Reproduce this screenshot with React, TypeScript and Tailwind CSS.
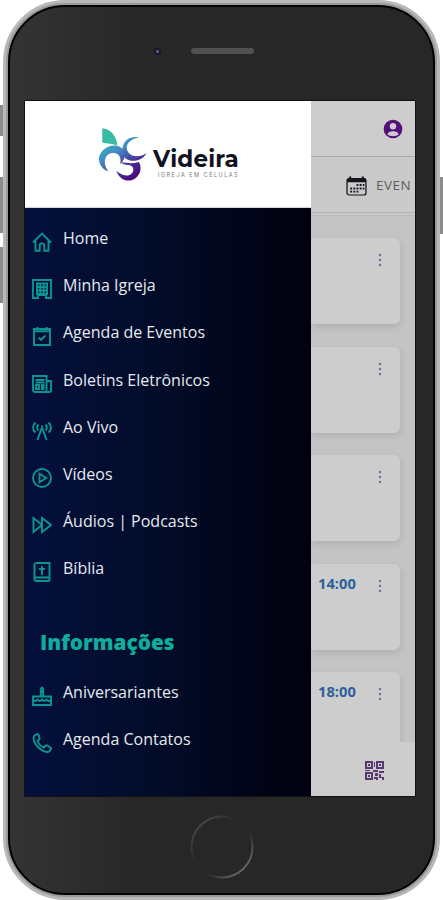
import type { ReactNode } from "react";

interface MenuItem {
  label: string;
  icon: ReactNode;
}

const MAIN_ITEMS: MenuItem[] = [
  {
    label: "Home",
    icon: <path d="M1 10.5 10 1.5l9 9M3.5 8.5v10.2h4.2v-5a2.3 2.3 0 0 1 4.6 0v5h4.2V8.5" />,
  },
  {
    label: "Minha Igreja",
    icon: (
      <path d="M1 1h18v18h-5v-3H6v3H1zM5 4v11M8.3 4v12M11.7 4v12M15 4v11M4 4.5h12M4 8h12M4 11.5h12M4 15h12" />
    ),
  },
  {
    label: "Agenda de Eventos",
    icon: <path d="M2 3h16v16H2zM2 5.2h16M5.5 1v3M14.5 1v3M6.8 11.5l2.3 2.3 4.3-4.3" />,
  },
  {
    label: "Boletins Eletrônicos",
    icon: (
      <path d="M1 2h13.5v16H3a2 2 0 0 1-2-2zM14.5 7H19v9a2 2 0 0 1-2 2h-3M3.5 6h9M3.5 8.5h9M4 11h3v4H4zM9 11h3.5M9 13h3.5M9 15h3.5" />
    ),
  },
  {
    label: "Ao Vivo",
    icon: (
      <path d="M9.5 7.5 5.5 19M10.5 7.5 14.5 19M10 4.5v4M6.5 3.5a4.5 4.5 0 0 0 0 6M13.5 3.5a4.5 4.5 0 0 1 0 6M3.5 1.5C.2 4.5.2 8.5 3.5 11.5M16.5 1.5c3.3 3 3.3 7 0 10" />
    ),
  },
  {
    label: "Vídeos",
    icon: (
      <>
        <circle cx="10" cy="10" r="9" />
        <path d="M7.5 5.8v8.4l6.7-4.2z" />
      </>
    ),
  },
  {
    label: "Áudios | Podcasts",
    icon: <path d="M1.5 3v14L10 10zM10 3v14l9-7z" />,
  },
  {
    label: "Bíblia",
    icon: <path d="M17.5 15.5V1H4.5a2 2 0 0 0-2 2v14a2 2 0 0 0 2 2h13M2.8 15.5h14.7v3.5M10 4v9M7 7h6" />,
  },
];

const INFO_ITEMS: MenuItem[] = [
  {
    label: "Aniversariantes",
    icon: (
      <path d="M1 10.5h18V19H1zM1 13.5c1.5 2 3 2 4.5 0 1.5 2 3 2 4.5 0 1.5 2 3 2 4.5 0 1.5 2 3 2 4.5 0M8.8 10V6h2.4v4M10 1C8 3.7 8.5 5 10 5s2-1.3 0-4" />
    ),
  },
  {
    label: "Agenda Contatos",
    icon: (
      <path d="M5.3 1.2 2.7 2.4C-.2 5 3 11 6 14s8.5 6.5 11.5 4.3l1.4-2.2c.3-.7 0-1.2-.5-1.6l-3.2-2c-.7-.4-1.3-.2-1.8.4L12 14.5C9.5 13.5 6.5 10.5 5.5 8L7.2 6.6c.5-.5.6-1 .3-1.7L6.6 2c-.2-.6-.7-1-1.3-.8z" />
    ),
  },
];

const EVENT_TIMES = ["", "", "", "14:00", "18:00"];

const MenuRow = ({ item }: { item: MenuItem }) => (
  <li className="flex h-[47.2px] items-start">
    <svg
      viewBox="0 0 20 20"
      className="mt-[5px] ml-[7px] h-5 w-5 shrink-0 fill-none stroke-[#0b9590] stroke-[1.9]"
    >
      {item.icon}
    </svg>
    <span className="ml-[11px] text-[16px] leading-[22px] whitespace-nowrap text-[#e6e9ee]">
      {item.label}
    </span>
  </li>
);

const Logo = () => (
  <div className="flex h-[107px] items-start border-b border-gray-300 bg-white">
    <svg viewBox="0 0 50 58" className="mt-6 ml-[72px] h-[58px] w-[50px] shrink-0">
      <defs>
        <linearGradient id="grape" gradientUnits="userSpaceOnUse" x1="6" y1="12" x2="34" y2="54">
          <stop offset="0" stopColor="#2fc4ae" />
          <stop offset="0.4" stopColor="#4389c5" />
          <stop offset="0.65" stopColor="#45459e" />
          <stop offset="1" stopColor="#4b087b" />
        </linearGradient>
      </defs>
      <path d="M5.3 3.3C13 4 19.5 10 20.5 21 16 18 10 19 5.3 17.5z" fill="#39baa4" />
      <g fill="url(#grape)">
        <path d="M41.5 12.5C30 10 23 20 26 30c3 8 19 8 23.5-2C43 33 34 32 31 27c-4-7 2-13 10.500-14.5z" />
        <path d="M26 24C16 15 1 25 2 35c1 7 5 10 9.5 11.5C5 38 8 29 15 28c7-1 10 5 8 11 5-4 6-9 3-15z" />
        <path d="M24 37c2 3 5 3 8 3 6 1 6 9-1 10.5-4 .5-8-1.5-11.5-4.5 2.5 8 9.5 11 15.5 9 7-2 11-11 7-18-7 2-12 1-18 0z" />
      </g>
    </svg>
    <div className="mt-[46px] ml-1.5">
      <p className="font-[Montserrat,Inter,sans-serif] text-[23px] leading-6 font-bold tracking-[0.2px] text-[#10121d]">
        Videira
      </p>
      <p className="mt-0.5 ml-[5px] font-[Inter,sans-serif] text-[5.5px] leading-[5px] tracking-[1.5px] whitespace-nowrap text-[#777785]">
        IGREJA EM CÉLULAS
      </p>
    </div>
  </div>
);

const Drawer = () => (
  <aside className="flex w-[286px] shrink-0 flex-col bg-linear-to-r from-[#04103d] via-[#020b27] to-[#01020f]">
    <Logo />
    <ul className="mt-[19px] h-[379px]">
      {MAIN_ITEMS.map((item) => (
        <MenuRow key={item.label} item={item} />
      ))}
    </ul>
    <h2 className="mt-[22px] ml-[15px] text-[20.8px] leading-[28px] font-extrabold text-[#0ead9d]">
      Informações
    </h2>
    <ul className="mt-[25px]">
      {INFO_ITEMS.map((item) => (
        <MenuRow key={item.label} item={item} />
      ))}
    </ul>
  </aside>
);

const EventCard = ({ time }: { time: string }) => (
  <div className="flex h-[86px] w-[89px] shrink-0 items-start rounded-r-md bg-[#cdcdcd] pt-[9px] shadow-[1px_3px_7px_rgba(0,0,0,0.1)]">
    <span className="ml-[7px] w-[48px] text-[14.7px] leading-5 font-bold text-[#2e5f9c]">{time}</span>
    <svg viewBox="0 0 4 14" className="mt-[6px] ml-[12px] h-3.5 w-1 fill-[#6173a0]">
      <circle cx="2" cy="2" r="1.2" />
      <circle cx="2" cy="7" r="1.2" />
      <circle cx="2" cy="12" r="1.2" />
    </svg>
  </div>
);

const EventsPanel = () => (
  <main className="flex min-w-0 flex-1 flex-col overflow-hidden bg-[#cdcdcd]">
    <header className="flex h-14 shrink-0 items-start justify-end border-b border-[#aaa] pt-[18px] pr-[12px]">
      <svg viewBox="0 0 20 20" className="h-5 w-5">
        <circle cx="10" cy="10" r="9.3" fill="#511077" />
        <circle cx="10" cy="7.2" r="3.2" fill="#d0c8d5" />
        <path d="M4.5 15.5c0-4.5 11-4.5 11 0-2.5 2.3-8.5 2.3-11 0z" fill="#d0c8d5" />
      </svg>
    </header>
    <div className="flex h-[56px] shrink-0 items-center overflow-hidden border-b border-[#b4b4b4] bg-[#cacaca] pl-[35px]">
      <svg viewBox="0 0 20 20" className="mt-0.5 h-5 w-[21px] shrink-0" preserveAspectRatio="none">
        <rect x="1" y="2.5" width="18" height="16.5" rx="2" fill="none" stroke="#15151d" strokeWidth="1.2" />
        <path d="M1 6.200V3l2-1V.5h2V2h10V.5h2V2l2 1v3.200z" fill="#15151d" />
        <path
          d="M10 9h1.8M13 9h1.8M16 9h1.5M4 12.5h1.8M7 12.5h1.8M10 12.5h1.8M13 12.5h1.8M16 12.5h1.5M4 15.7h1.8M7 15.7h1.8M10 15.7h1.8"
          stroke="#15151d"
          strokeWidth="1.8"
        />
      </svg>
      <span className="ml-[9px] text-[13.5px] leading-5 tracking-[0.5px] text-[#5e5e5e]">EVEN</span>
    </div>
    <div className="h-[3px] shrink-0 border-b border-[#bababa] bg-[#c8c8c8]" />
    <div className="flex h-[526px] w-full shrink-0 flex-col gap-[22.5px] overflow-hidden bg-[#c4c4c4] pt-[22px]">
      {EVENT_TIMES.map((time, index) => (
        <EventCard key={index} time={time} />
      ))}
    </div>
    <footer className="flex flex-1 justify-end bg-[#cdcdcd] pt-[19px] pr-[31px]">
      <svg viewBox="0 0 19 19" className="h-[19px] w-[19px]" fill="#583970">
        <path d="M0 0h8v8H0zm2 2v4h4V2zM11 0h8v8h-8zm2 2v4h4V2zM0 11h8v8H0zm2 2v4h4v-4z" fillRule="evenodd" />
        <path d="M3 3h2v2H3zM14 3h2v2h-2zM3 14h2v2H3zM9 1h1v5H9zM8 9h5v2H8zM10 12h3v3h-3zM14 10h5v2h-5zM14 13h2v3h3v3h-2v-2h-3zM9 16h4v3h-2v-1H9zM0 9h5v1H0z" />
      </svg>
    </footer>
  </main>
);

const App: React.FC = () => {
  return (
    <div className="relative h-[900px] w-[443px] overflow-hidden bg-white font-['Open_Sans',sans-serif]">
      <div className="absolute top-[105px] left-0 h-[31px] w-2 bg-[#8c8c8c]" />
      <div className="absolute top-[177px] left-0 h-[56px] w-2 bg-[#8c8c8c]" />
      <div className="absolute top-[247px] left-0 h-[56px] w-2 bg-[#8c8c8c]" />
      <div className="absolute top-[177px] right-0 h-[57px] w-2 bg-[#8c8c8c]" />

      <div className="relative mx-[3px] h-[900px] rounded-[62px] border-[3px] border-[#b8b8b8] bg-[#999] p-0.5">
        <div className="flex h-full flex-col rounded-[57px] border-2 border-black bg-[#272727] bg-linear-to-r from-[#343434] to-[#272727] to-30% px-[15px]">
          <div className="flex h-[94px] shrink-0 items-start pt-[41px] pl-[129px]">
            <span className="h-[7px] w-[7px] rounded-full border-2 border-[#191725] bg-[#68639b]" />
            <span className="ml-[30px] h-1.5 w-[63px] rounded-full bg-[#505050]" />
          </div>
          <div className="flex h-[695px] w-[390px] shrink-0 shadow-[0_0_0_1px_#111]">
            <Drawer />
            <EventsPanel />
          </div>
          <svg viewBox="0 0 64 64" className="mt-[19px] ml-[165px] h-16 w-16 fill-none">
            <defs>
              <linearGradient id="ring" x1="0" y1="0" x2="1" y2="1">
                <stop offset="0" stopColor="#555" />
                <stop offset="0.4" stopColor="#272727" />
                <stop offset="0.6" stopColor="#272727" />
                <stop offset="1" stopColor="#858585" />
              </linearGradient>
            </defs>
            <circle cx="32" cy="32" r="30.5" stroke="url(#ring)" strokeWidth="2" />
          </svg>
        </div>
      </div>
    </div>
  );
};

export default App;
